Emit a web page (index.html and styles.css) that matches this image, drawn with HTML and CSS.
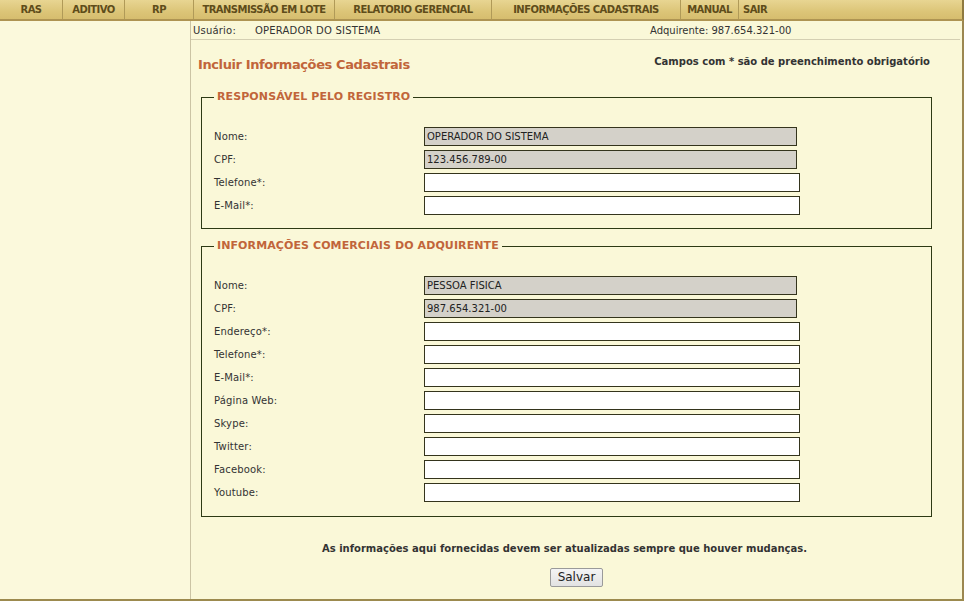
FILE: index.html
```html
<!DOCTYPE html>
<html lang="pt-BR">
<head>
<meta charset="utf-8">
<title>Incluir Informações Cadastrais</title>
<link rel="stylesheet" href="styles.css">
</head>
<body>
<nav class="menubar">
  <span class="mi w-ras">RAS</span>
  <span class="mi w-adi">ADITIVO</span>
  <span class="mi w-rp">RP</span>
  <span class="mi w-trn">TRANSMISSÃO EM LOTE</span>
  <span class="mi w-rel">RELATORIO GERENCIAL</span>
  <span class="mi w-inf">INFORMAÇÕES CADASTRAIS</span>
  <span class="mi w-man">MANUAL</span>
  <span class="mi w-sair">SAIR</span>
</nav>
<div class="layout">
  <aside class="sidebar"></aside>
  <main class="main">
    <div class="userbar">
      <span class="ulabel">Usuário:</span>
      <span class="uname">OPERADOR DO SISTEMA</span>
      <span class="uadq">Adquirente: 987.654.321-00</span>
    </div>
    <div class="head">
      <h1 class="title">Incluir Informações Cadastrais</h1>
      <span class="req">Campos com * são de preenchimento obrigatório</span>
    </div>
    <fieldset class="box box1">
      <legend>RESPONSÁVEL PELO REGISTRO</legend>
      <div class="grid">
        <label>Nome:</label><input class="ro" value="OPERADOR DO SISTEMA" readonly>
        <label>CPF:</label><input class="ro" value="123.456.789-00" readonly>
        <label>Telefone*:</label><input class="ed">
        <label>E-Mail*:</label><input class="ed">
      </div>
    </fieldset>
    <fieldset class="box box2">
      <legend>INFORMAÇÕES COMERCIAIS DO ADQUIRENTE</legend>
      <div class="grid">
        <label>Nome:</label><input class="ro" value="PESSOA FISICA" readonly>
        <label>CPF:</label><input class="ro" value="987.654.321-00" readonly>
        <label>Endereço*:</label><input class="ed">
        <label>Telefone*:</label><input class="ed">
        <label>E-Mail*:</label><input class="ed">
        <label>Página Web:</label><input class="ed">
        <label>Skype:</label><input class="ed">
        <label>Twitter:</label><input class="ed">
        <label>Facebook:</label><input class="ed">
        <label>Youtube:</label><input class="ed">
      </div>
    </fieldset>
    <p class="note">As informações aqui fornecidas devem ser atualizadas sempre que houver mudanças.</p>
    <div class="actions"><button class="btn" type="button">Salvar</button></div>
  </main>
</div>
</body>
</html>
```
FILE: styles.css
```css
html, body {
  margin: 0;
  padding: 0;
  background: #fbf8da;
  font-family: "DejaVu Sans", Verdana, sans-serif;
  color: #333;
}
.menubar {
  display: flex;
  height: 19px;
  background: linear-gradient(#e8d592, #dcc578 60%, #d6bd6e);
  border-bottom: 2px solid #ae9452;
  border-right: 2px solid #8f7a40;
  box-sizing: content-box;
}
.mi {
  font-size: 10px;
  font-weight: bold;
  color: #5e4c1a;
  line-height: 19px;
  letter-spacing: -0.55px;
  text-align: center;
  border-right: 1px solid #b09a58;
  box-sizing: border-box;
  white-space: nowrap;
}
.w-ras { width: 63px; }
.w-adi { width: 62px; }
.w-rp { width: 69px; }
.w-trn { width: 141px; }
.w-rel { width: 157px; }
.w-inf { width: 189px; }
.w-man { width: 58px; }
.w-sair { border-right: none; text-align: left; padding-left: 4px; }
.layout {
  display: flex;
  height: 578px;
  border-bottom: 2px solid #9c8a4e;
}
.sidebar {
  width: 190px;
  flex: none;
  border-right: 1px solid #cbc4a4;
  background: #fbf9dc;
}
.main {
  flex: 1;
  border-right: 2px solid #9c8750;
  background: #faf8d8;
}
.userbar {
  display: flex;
  height: 18px;
  align-items: center;
  font-size: 10px;
  color: #333;
  border-bottom: 1px solid #d4cfb2;
  margin-right: 2px;
  padding-left: 2px;
}
.ulabel { width: 62px; letter-spacing: 0.2px; }
.uname { width: 395px; letter-spacing: 0.2px; }
.uadq { letter-spacing: 0; }
.head {
  display: flex;
  justify-content: space-between;
  align-items: flex-start;
  padding: 16px 32px 0 7px;
  height: 40px;
  box-sizing: border-box;
}
.title {
  margin: 0;
  font-size: 13px;
  font-weight: bold;
  color: #c1653a;
  letter-spacing: -0.4px;
  padding-top: 1px;
}
.req {
  font-size: 10px;
  font-weight: bold;
  color: #333;
}
.box {
  margin: 0 30px 0 10px;
  border: 1px solid #2d3a14;
  padding: 0 12px;
}
.box legend {
  font-size: 11px;
  font-weight: bold;
  color: #c1653a;
  padding: 0 3px;
  margin-left: 0;
  line-height: 14px;
  letter-spacing: 0.1px;
}
.box1 { margin-top: 10px; padding-bottom: 13px; }
.box2 { margin-top: 10px; padding-bottom: 14px; }
.grid {
  display: grid;
  grid-template-columns: 210px auto;
  row-gap: 4px;
  padding-top: 23px;
  align-items: center;
}
.grid label {
  font-size: 10px;
  letter-spacing: 0.15px;
  color: #333;
}
.grid input {
  height: 19px;
  box-sizing: border-box;
  border: 1px solid #34341c;
  font-family: "DejaVu Sans", Verdana, sans-serif;
  font-size: 10px;
  color: #222;
  padding: 0 2px;
  margin: 0;
  outline: none;
}
.grid .ro { width: 373px; background: #d4d1c9; }
.grid .ed { width: 376px; background: #fff; }
.note {
  margin: 26px 0 0 0;
  text-align: center;
  font-size: 10px;
  font-weight: bold;
  color: #333;
  padding-right: 24px;
}
.actions {
  text-align: center;
  margin-top: 12px;
}
.btn {
  font-family: "DejaVu Sans", Verdana, sans-serif;
  font-size: 12px;
  color: #222;
  width: 53px;
  height: 19px;
  padding: 0;
  border: 1px solid #9a9a9a;
  background: linear-gradient(#f4f4f4, #e2e2e2);
  border-radius: 2px;
}
```
